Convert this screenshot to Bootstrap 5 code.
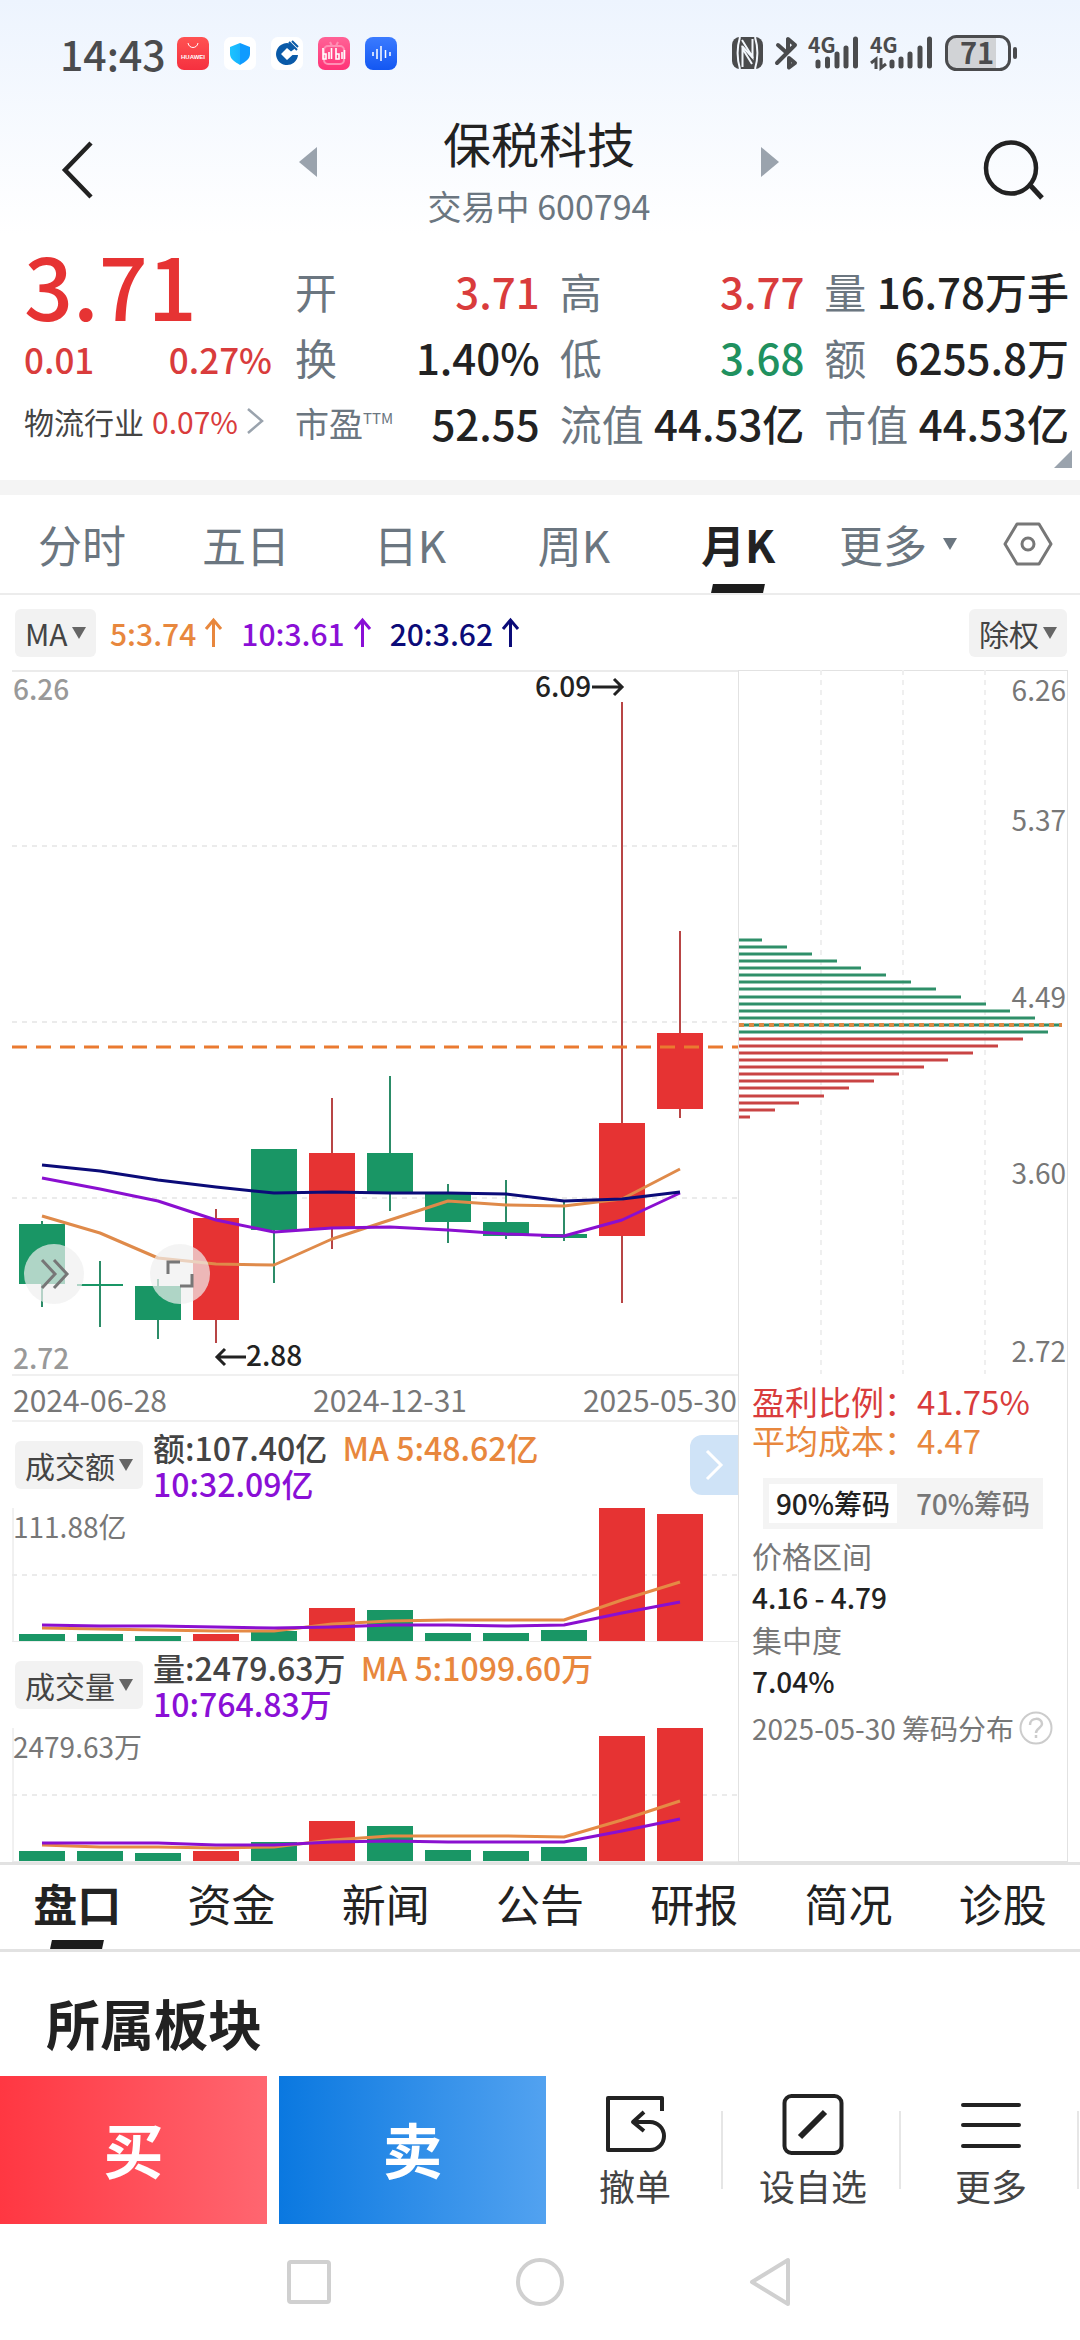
<!DOCTYPE html>
<html lang="zh-CN">
<head>
<meta charset="utf-8">
<meta name="viewport" content="width=device-width, initial-scale=1">
<title>保税科技 600794</title>
<link href="https://cdn.jsdelivr.net/npm/bootstrap@5.3.0/dist/css/bootstrap.min.css" rel="stylesheet">
<style>
:root{--up:#e63333;--down:#199665;--ma5:#e8873d;--ma10:#8a0fd6;--ma20:#0b0b78;--ink:#222;--slate:#6b7680;--rule:#e2e2e2}
body{font-family:"Noto Sans CJK SC",sans-serif;color:var(--ink);background:#fff;line-height:1;overflow-x:hidden}
a{text-decoration:none;color:inherit}
svg{display:block;overflow:visible}
button.bare{border:0;background:none;padding:0;color:inherit}
.med{font-weight:500}
.c-up{color:#d93c3c}.c-down{color:#20915f}.c-ma5{color:var(--ma5)}.c-ma10{color:var(--ma10)}.c-ma20{color:var(--ma20)}
.topwash{background:linear-gradient(#edf4fe,#fff)}
.sysbar{height:106px;padding:0 60px;color:#4a4b4d}
.clock{font-size:41px;line-height:48px;margin-right:11px}
.apps{gap:15px}
.titlebar{height:128px;padding:0 36px 0 62px}
.stockname{font-size:48px;line-height:64px;font-weight:400;margin:0}
.stocksub{font-size:34px;line-height:48px;margin-top:8px;color:var(--slate)}
.switcher{width:480px}
.quote{padding:4px 11px 0 24px;height:246px}
.lastcol{width:248px;margin-right:23px}
.price{font-size:86px;line-height:92px;color:var(--up)}
.chg{font-size:35px;line-height:48px;margin-top:5px}
.sector{font-size:30px;line-height:40px;margin-top:18px;color:#444}
.facts{gap:0 20px;display:grid;grid-template-columns:repeat(3,1fr);align-content:start;font-size:42px;line-height:66px;margin:20px 0 0}
.facts dt{font-weight:400;color:var(--slate)}
.facts dd{margin:0;font-weight:500}
.facts .pe{font-size:34px}
.facts .ttm{font-size:15px;line-height:15px;margin-top:20px}
.corner{position:absolute;right:0;bottom:12px}
.strip{height:15px;background:#f4f4f4}
.periods{display:grid;grid-template-columns:repeat(6,1fr) 96px;border-bottom:2px solid #ececec;font-size:44px;line-height:98px;color:var(--slate)}
.slash{position:relative}
.slash.on{color:var(--ink);font-weight:700}
.slash.on::after{content:"";position:absolute;left:50%;bottom:0;width:52px;height:9px;margin-left:-26px;background:#1c1c1c;transform:skewX(-12deg)}
.tri{width:0;height:0;border:7px solid transparent;border-top:12px solid var(--slate);border-bottom:0}
.pick{position:relative}
.pick select{display:block;appearance:none;border:0;border-radius:6px;background:#f2f2f2;color:#444;font-size:30px;line-height:48px;height:48px;padding:0 28px 0 10px}
.pick::after{content:"";position:absolute;right:10px;top:18px;border:7px solid transparent;border-top:12px solid #666;border-bottom:0;pointer-events:none}
.maline{height:75px;padding:0 13px 0 15px;font-size:30px}
.mavals{gap:18px;margin-left:14px}
.board{display:grid;grid-template-columns:726fr 330fr;margin:0 12px}
.board svg text{font-size:28px}
.kline,.chip svg,.vol svg,.dates svg{width:100%;height:auto}
.chip .foot svg{width:34px}
.kwrap{position:relative}
.round{position:absolute;bottom:10%;width:60px;height:60px;border-radius:50%;background:rgba(240,240,240,.7)!important}
.round.r1{left:12px}.round.r2{left:138px}
.dates{border-top:2px solid #f0f0f0;border-bottom:2px solid #f0f0f0}
.board .dates svg text{font-size:30px;fill:#777}
.volhead{position:relative;height:86px;padding-left:3px;gap:10px}
.volhead .nums{font-size:32px;line-height:36px;color:#444}
.expand{position:absolute;right:0;top:13px;width:48px;height:60px;border-radius:12px 0 0 12px;background:#cfe3f7!important}
.chip{box-shadow:inset 0 0 0 1px var(--rule)}
.chipinfo{padding:8px 14px 0;color:#777}
.chipinfo .big{font-size:33px;line-height:39px}
.range{margin:18px 11px 0;background:#f4f4f4;padding:6px;width:280px;height:51px}
.range label{font-size:28px;line-height:39px;width:128px;text-align:center;font-weight:500;color:#777}
.range .btn-check:checked+label{background:#fff;color:var(--ink)}
.range label+input+label{margin-left:12px}
.chipinfo .lab{font-size:30px;line-height:44px}
.chipinfo .val{font-size:28px;line-height:40px;color:var(--ink);font-weight:500}
.chipinfo .foot{font-size:28px;line-height:44px;margin-top:5px;gap:5px}
.pages{display:grid;grid-template-columns:repeat(7,1fr);border-top:3px solid var(--rule);border-bottom:3px solid var(--rule);font-size:44px;line-height:76px;text-align:center}
.pages a{padding-bottom:8px}
.blockhead{font-size:54px;line-height:72px;font-weight:700;margin:0;padding:35px 46px 17px}
.trade{height:148px}
.buy,.sell{border:0;padding:0 0 4px;color:#fff;font-size:60px;font-weight:700;flex:267 1 0}
.buy{background:linear-gradient(90deg,#ff3742,#ff6670);margin-right:12px}
.sell{background:linear-gradient(90deg,#0a78e0,#52a2f0)}
.tools{flex:534 1 0}
.tools button.bare{position:relative;flex:1;font-size:36px;line-height:44px;color:#444;gap:8px}
.tools button.bare::after{content:"";position:absolute;right:1px;top:35px;height:78px;width:2px;background:#e6e6e6}
.sysnav{height:116px;gap:184px;padding-right:2px}
</style>
<script src="https://cdn.jsdelivr.net/npm/bootstrap@5.3.0/dist/js/bootstrap.bundle.min.js"></script>
</head>
<body>
<header class="topwash">
  <div class="sysbar d-flex align-items-center justify-content-between">
    <div class="d-flex align-items-center">
      <span class="clock med">14:43</span>
      <div class="apps d-flex">
        <svg width="32" height="33" viewBox="0 0 32 33"><defs><linearGradient id="g1" x2="0" y2="1"><stop stop-color="#ff5252"/><stop offset="1" stop-color="#f5303f"/></linearGradient></defs><rect width="32" height="33" rx="7" fill="url(#g1)"/><path d="M11 6c1 6 9 6 10 0" fill="none" stroke="#fff" stroke-width="1"/><text x="16" y="21.500" font-family="Liberation Sans" font-size="6" font-weight="700" fill="#fff" text-anchor="middle">HUAWEI</text></svg>
        <svg width="32" height="33" viewBox="0 0 32 33"><defs><linearGradient id="g2"><stop stop-color="#1cc4ff"/><stop offset=".5" stop-color="#17b3ff"/><stop offset=".5" stop-color="#0f9bff"/></linearGradient></defs><rect width="32" height="33" rx="7" fill="#fff"/><path d="M16 6l10 4v7c0 5-5 8-10 11-5-3-10-6-10-11v-7z" fill="url(#g2)"/></svg>
        <svg width="32" height="33" viewBox="0 0 32 33"><rect width="32" height="33" rx="7" fill="#fff"/><path d="M19 6.500A11 11 0 1 0 27 18h-5.500l-5.500 5-6-6 6-6 4 3.500 4-3z" fill="#0a5aa8"/><path d="M18 5l8 8M21 4l6 6" stroke="#0a5aa8" stroke-width="2"/></svg>
        <svg width="32" height="33" viewBox="0 0 32 33"><defs><linearGradient id="g3" x2="0" y2="1"><stop stop-color="#ff6296"/><stop offset="1" stop-color="#ff3377"/></linearGradient></defs><rect width="32" height="33" rx="7" fill="url(#g3)"/><rect x="6" y="9" width="20" height="18" rx="4" fill="none" stroke="#ff8fb4" stroke-width="2"/><path d="M12 5l2 4M20 5l-2 4" stroke="#ff8fb4" stroke-width="2"/><path d="M5 11v11h3v-5H5M11 15v7M13.500 11v11M18 11v11h3v-5h-3M24 15v7M26.500 13v9" fill="none" stroke="#fff" stroke-width="1.600"/></svg>
        <svg width="32" height="33" viewBox="0 0 32 33"><defs><linearGradient id="g4" x2="0" y2="1"><stop stop-color="#3b7bff"/><stop offset="1" stop-color="#1357f2"/></linearGradient></defs><rect width="32" height="33" rx="8" fill="url(#g4)"/><path d="M8 15v4M12 12v10M16 9v15M20.500 13v8M25 15v4" stroke="#fff" stroke-width="1.500"/></svg>
      </div>
    </div>
    <svg width="288" height="38" viewBox="0 0 288 38" fill="#4a4b4d">
      <rect x="0" y="3" width="31" height="32" rx="8"/><path d="M8 3C5 13 5 25 8 35M23 3c3 10 3 22 0 32M10.500 33V14.500L20 30M20.500 5v18L10 6" fill="none" stroke="#f3f7fd" stroke-width="2"/><path d="M10 12l11 12" stroke="#f3f7fd" stroke-width="2"/>
      <path d="M46 11l9 8 8-8-7-6v13M55 19L45 29M57 33.500V24l6 5z" fill="none" stroke="#4a4b4d" stroke-width="4" stroke-linejoin="round" stroke-linecap="round"/>
      <g font-family="Noto Sans CJK SC" font-size="21" font-weight="700"><text x="76" y="19">4G</text><text x="138" y="19">4G</text></g>
      <g stroke="#4a4b4d" stroke-width="5" stroke-linecap="round"><path d="M86 28v4M95.500 25v7M105 20v12M114 14v18M123.500 5v27M160 28v4M169 25v7M178 20v12M188 14v18M197.500 5v27"/></g>
      <path d="M139 29l5-4v10M149 24v10l5-4" fill="none" stroke="#4a4b4d" stroke-width="3"/>
      <path d="M223 4h41v30h-41a8 8 0 0 1-8-8v-14a8 8 0 0 1 8-8z" fill="#d1d3d6"/><rect x="214.500" y="2.500" width="63" height="33" rx="10" fill="none" stroke="#4a4b4d" stroke-width="3"/><rect x="281" y="13" width="4" height="12" rx="2"/>
      <text x="245" y="30" font-family="Noto Sans CJK SC" font-size="29" font-weight="700" text-anchor="middle">71</text>
    </svg>
  </div>
  <div class="titlebar d-flex align-items-center justify-content-between">
    <button class="bare" aria-label="返回"><svg width="32" height="58" viewBox="0 0 32 58"><path d="M29 2L3 29l26 27" fill="none" stroke="#222" stroke-width="4.500"/></svg></button>
    <div class="switcher d-flex justify-content-between align-items-center">
      <button class="bare mb-3" aria-label="上一只"><svg width="18" height="30"><path d="M18 0v30L0 15z" fill="#9aa3ad"/></svg></button>
      <div class="text-center"><h1 class="stockname">保税科技</h1><div class="stocksub">交易中 600794</div></div>
      <button class="bare mb-3" aria-label="下一只"><svg width="18" height="30"><path d="M0 0v30l18-15z" fill="#9aa3ad"/></svg></button>
    </div>
    <button class="bare" aria-label="搜索"><svg width="60" height="60" viewBox="0 0 60 60" fill="none" stroke="#222"><ellipse cx="27" cy="28" rx="25" ry="25.500" stroke-width="4.500"/><path d="M46 45l12 13" stroke-width="5"/></svg></button>
  </div>
</header>

<section class="quote d-flex position-relative">
  <div class="lastcol flex-shrink-0">
    <div class="price med">3.71</div>
    <div class="chg med c-up d-flex justify-content-between"><span>0.01</span><span>0.27%</span></div>
    <a href="#" class="sector d-flex align-items-center">物流行业<span class="c-up ms-2 me-2">0.07%</span><svg width="19" height="28" viewBox="0 0 19 28"><path d="M2 2l14 12L2 26" fill="none" stroke="#9aa3ad" stroke-width="2.500"/></svg></a>
  </div>
  <dl class="facts flex-grow-1">
    <div class="d-flex justify-content-between"><dt>开</dt><dd class="c-up">3.71</dd></div>
    <div class="d-flex justify-content-between"><dt>高</dt><dd class="c-up">3.77</dd></div>
    <div class="d-flex justify-content-between"><dt>量</dt><dd>16.78万手</dd></div>
    <div class="d-flex justify-content-between"><dt>换</dt><dd>1.40%</dd></div>
    <div class="d-flex justify-content-between"><dt>低</dt><dd class="c-down">3.68</dd></div>
    <div class="d-flex justify-content-between"><dt>额</dt><dd>6255.8万</dd></div>
    <div class="d-flex justify-content-between"><dt class="pe d-flex">市盈<span class="ttm">TTM</span></dt><dd>52.55</dd></div>
    <div class="d-flex justify-content-between"><dt>流值</dt><dd>44.53亿</dd></div>
    <div class="d-flex justify-content-between"><dt>市值</dt><dd>44.53亿</dd></div>
  </dl>
  <svg class="corner me-2" width="18" height="18"><path d="M18 0v18H0z" fill="#9aa3ad"/></svg>
</section>
<div class="strip"></div>

<nav class="periods text-center">
  <a href="#" class="slash">分时</a><a href="#" class="slash">五日</a><a href="#" class="slash">日K</a><a href="#" class="slash">周K</a><a href="#" class="slash on">月K</a>
  <a href="#" class="d-flex align-items-center justify-content-center gap-3 pe-2">更多<span class="tri"></span></a>
  <button class="bare d-flex align-items-center justify-content-center pe-2" aria-label="设置"><svg width="50" height="44" viewBox="0 0 50 44" fill="none" stroke="#777" stroke-width="3"><path d="M14 2h22l12 20-12 20H14L2 22z" stroke-linejoin="round"/><circle cx="25" cy="22" r="6"/></svg></button>
</nav>

<div class="maline d-flex align-items-center">
  <div class="pick"><select aria-label="均线"><option>MA</option></select></div>
  <div class="mavals d-flex med">
    <span class="c-ma5 d-flex align-items-center gap-2">5:3.74<svg width="19" height="30" viewBox="0 0 19 30"><path d="M9.500 29V3M2 11l7.500-9 7.500 9" fill="none" stroke="currentColor" stroke-width="3"/></svg></span>
    <span class="c-ma10 d-flex align-items-center gap-2">10:3.61<svg width="19" height="30" viewBox="0 0 19 30"><path d="M9.500 29V3M2 11l7.500-9 7.500 9" fill="none" stroke="currentColor" stroke-width="3"/></svg></span>
    <span class="c-ma20 d-flex align-items-center gap-2">20:3.62<svg width="19" height="30" viewBox="0 0 19 30"><path d="M9.500 29V3M2 11l7.500-9 7.500 9" fill="none" stroke="currentColor" stroke-width="3"/></svg></span>
  </div>
  <div class="pick ms-auto"><select aria-label="复权"><option>除权</option></select></div>
</div>

<main class="board">
  <div>
    <div class="kwrap">
      <svg class="kline" id="kline" viewBox="0 0 726 704"></svg>
      <button class="bare round r1" aria-label="快进"><svg width="60" height="60" fill="none" stroke="#777" stroke-width="3"><path d="M18 16l13 14-13 14M30 16l13 14-13 14"/></svg></button>
      <button class="bare round r2" aria-label="全屏"><svg width="60" height="60" fill="none" stroke="#777" stroke-width="3"><path d="M18 30V18h12M42 30v12H30"/></svg></button>
    </div>
    <div class="dates"><svg viewBox="0 0 726 44"><text x="1" y="36">2024-06-28</text><text x="378" y="36" text-anchor="middle">2024-12-31</text><text x="725" y="36" text-anchor="end">2025-05-30</text></svg></div>
    <div class="vol">
      <div class="volhead d-flex align-items-center">
        <div class="pick"><select aria-label="副图一"><option>成交额</option></select></div>
        <div class="nums med"><div>额:107.40亿 <span class="c-ma5 ms-2">MA 5:48.62亿</span></div><div class="c-ma10">10:32.09亿</div></div>
        <button class="bare expand" aria-label="展开"><svg width="48" height="60"><path d="M17 16l14 14-14 14" fill="none" stroke="#fff" stroke-width="3"/></svg></button>
      </div>
      <svg id="vol1" viewBox="0 0 726 134"></svg>
    </div>
    <div class="vol">
      <div class="volhead d-flex align-items-center">
        <div class="pick"><select aria-label="副图二"><option>成交量</option></select></div>
        <div class="nums med"><div>量:2479.63万 <span class="c-ma5 ms-2">MA 5:1099.60万</span></div><div class="c-ma10">10:764.83万</div></div>
      </div>
      <svg id="vol2" viewBox="0 0 726 134"></svg>
    </div>
  </div>
  <aside class="chip">
    <svg id="chips" viewBox="0 0 330 704"></svg>
    <div class="chipinfo">
      <div class="big c-up">盈利比例：41.75%</div>
      <div class="big c-ma5">平均成本：4.47</div>
      <div class="range d-flex">
        <input class="btn-check" type="radio" name="rng" id="r90" checked><label for="r90">90%筹码</label>
        <input class="btn-check" type="radio" name="rng" id="r70"><label for="r70">70%筹码</label>
      </div>
      <div class="lab mt-1">价格区间</div>
      <div class="val">4.16 - 4.79</div>
      <div class="lab">集中度</div>
      <div class="val">7.04%</div>
      <div class="foot d-flex align-items-center text-nowrap">2025-05-30 筹码分布<svg width="34" height="34" viewBox="0 0 34 34" fill="none" stroke="#ccc" stroke-width="2"><circle cx="17" cy="17" r="15.500"/><path d="M11 14c0-8 12-8 12-1 0 4-6 4-6 9M17 24v3" stroke-width="2.500"/></svg></div>
    </div>
  </aside>
</main>

<nav class="pages">
  <a href="#" class="slash on">盘口</a><a href="#">资金</a><a href="#">新闻</a><a href="#">公告</a><a href="#">研报</a><a href="#">简况</a><a href="#">诊股</a>
</nav>
<h2 class="blockhead">所属板块</h2>

<div class="trade d-flex">
  <button class="buy">买</button><button class="sell">卖</button>
  <div class="tools d-flex">
    <button class="bare d-flex flex-column align-items-center justify-content-center"><svg width="62" height="62" viewBox="0 0 62 62" fill="none" stroke="#222" stroke-width="4"><path d="M58 18V5H4v52h42a14 14 0 0 0 0-28H30M40 19L29 29l11 9" stroke-linejoin="round"/></svg>撤单</button>
    <button class="bare d-flex flex-column align-items-center justify-content-center"><svg width="62" height="62" viewBox="0 0 62 62" fill="none" stroke="#222" stroke-width="4"><rect x="2.500" y="3" width="57" height="57" rx="7"/><path d="M18 44l25-25" stroke-width="6"/></svg>设自选</button>
    <button class="bare d-flex flex-column align-items-center justify-content-center"><svg width="62" height="62" viewBox="0 0 62 62" stroke="#222" stroke-width="4" stroke-linecap="round"><path d="M3 12h56M3 32h56M3 53h56"/></svg>更多</button>
  </div>
</div>
<div class="sysnav d-flex justify-content-center align-items-center">
  <svg width="46" height="46" fill="none" stroke="#d0d0d0" stroke-width="4"><rect x="3" y="3" width="40" height="40" rx="2"/></svg>
  <svg width="48" height="48" fill="none" stroke="#d0d0d0" stroke-width="4"><circle cx="24" cy="24" r="22"/></svg>
  <svg width="44" height="50" fill="none" stroke="#d0d0d0" stroke-width="4" stroke-linejoin="round"><path d="M40 3v44L4 25z"/></svg>
</div>

<script>
const UP='#e63333',DN='#199665',X=i=>30+58*i;
const poly=(ys,c)=>`<polyline points="${ys.map((y,i)=>X(i)+','+y).join(' ')}" fill="none" stroke="${c}" stroke-width="3" stroke-linejoin="round"/>`;
const dash=y=>`<path d="M0 ${y}H726" stroke="#ebebeb" stroke-width="2" stroke-dasharray="5 5"/>`;
// [rising, high, bodyTop, bodyBottom, low]
const K=[[0,551,554,614,637],[0,591,614,616,657],[0,609,616,650,669],[1,539,548,650,673],[0,479,479,560,613],[1,428,483,558,579],[0,406,483,523,541],[0,514,523,552,573],[0,510,552,566,569],[0,530,564,568,571],[1,32,453,566,633],[1,261,363,439,448]];
let s='<path d="M0 1H726" stroke="#ebebeb" stroke-width="2"/>'+[176,352,528].map(dash).join('');
K.forEach((k,i)=>{const c=k[0]?UP:DN;s+=`<path d="M${X(i)} ${k[1]}V${k[4]}" stroke="${k[0]?'#b84545':'#2c8c68'}" stroke-width="2"/><rect x="${X(i)-23}" y="${k[2]}" width="46" height="${k[3]-k[2]}" fill="${c}"/>`});
s+='<path d="M0 377H726" stroke="#ea7a30" stroke-width="3" stroke-dasharray="15 9"/>';
s+=poly([546,563,588,594,595,569,550,531,535,536,529,499],'#df8a4a')+poly([508,519,531,550,562,558,557,560,564,566,550,523],'#8a0fd0')+poly([495,501,510,517,523,522,523,523,524,531,529,522],'#0b0b78');
s+='<g fill="#999" font-weight="500"><text x="1" y="30">6.26</text><text x="1" y="699">2.72</text></g><g fill="#222" font-weight="500"><text x="523" y="27">6.09</text><text x="234" y="696">2.88</text></g><path d="M580 17h30M602 9l8 8-8 8M234 687h-29M213 679l-8 8 8 8" fill="none" stroke="#222" stroke-width="3"/>';
kline.innerHTML=s;
const vol=(el,h,up,m5,m10,t)=>{el.innerHTML='<path d="M1 0V134" stroke="#e2e2e2"/><path d="M0 133.500H726" stroke="#ebebeb"/>'+dash(67)+h.map((v,i)=>`<rect x="${X(i)-23}" y="${133-v}" width="46" height="${v}" fill="${up[i]?UP:DN}"/>`).join('')+poly(m5,'#e58a45')+poly(m10,'#8a0fd0')+`<text x="1" y="30" fill="#777">${t}</text>`};
const U=[0,0,0,1,0,1,0,0,0,0,1,1];
vol(vol1,[7,7,5,7,10,33,31,8,8,11,133,127],U,[120,121,122,123,123,116,113,112,112,112,92,74],[117,118,118,119,120,119,117,117,118,117,105,94],'111.88亿');
vol(vol2,[10,10,8,10,19,40,35,11,10,14,125,133],U,[117,119,119,120,119,112,108,108,108,109,92,73],[115,115,115,117,117,114,113,114,114,114,103,91],'2479.63万');
let c='';
[83,165,247].forEach(x=>c+=`<path d="M${x} 0V704" stroke="#efefef" stroke-width="2" stroke-dasharray="5 5"/>`);
[24,49,74,99,123,148,173,198,223,248,272,297,322,310,285,260,235,210,186,161,136,111,86,61,37,12].forEach((w,i)=>{const y=270+Math.round(i*7.07);c+=`<path d="M1 ${y}H${w}" stroke="${i<14?'#2f8f69':'#c94444'}" stroke-width="3"/>`});
c+='<path d="M1 355H324" stroke="#dd8a45" stroke-width="4" stroke-dasharray="5 5"/><g fill="#777" text-anchor="end">';
[['6.26',31],['5.37',161],['4.49',338],['3.60',514],['2.72',692]].forEach(p=>c+=`<text x="328" y="${p[1]}">${p[0]}</text>`);
chips.innerHTML=c+'</g>';
</script>
</body>
</html>
